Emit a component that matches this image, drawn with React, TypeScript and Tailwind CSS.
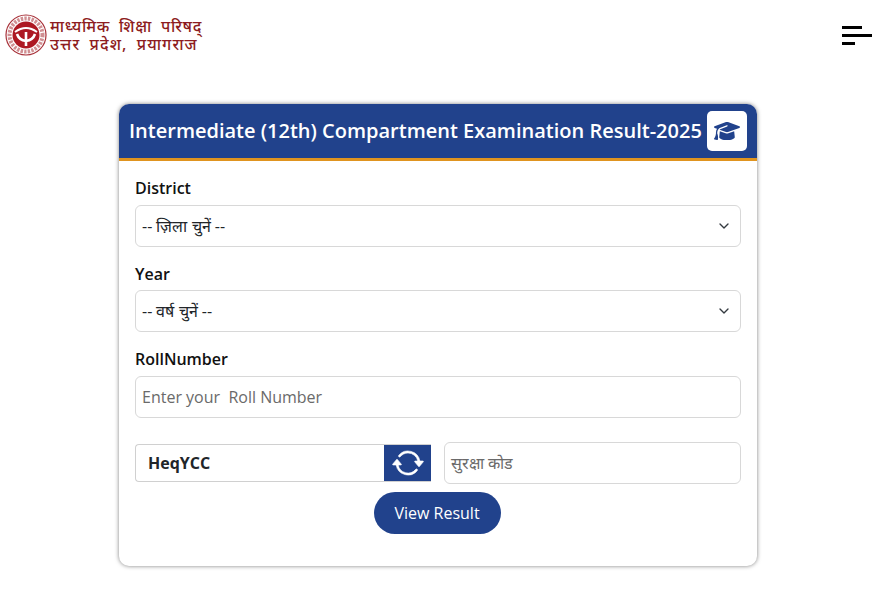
import { BsArrowRepeat } from "react-icons/bs";
import { FaGraduationCap } from "react-icons/fa6";
import { LuChevronDown } from "react-icons/lu";

function Emblem() {
  return (
    <svg viewBox="0 0 42 42" className="h-[42px] w-[42px] shrink-0">
      <circle cx="21" cy="21" r="20" fill="#fff" stroke="#a8323a" strokeWidth="1.2" />
      <circle cx="21" cy="21" r="16.5" fill="none" stroke="#d08f92" strokeWidth="4" strokeDasharray="2.4 1.2" />
      <circle cx="21" cy="21" r="13.5" fill="#ad1822" />
      <path d="M10 18 Q21 10 32 18" stroke="#fff" strokeWidth="2" fill="none" />
      <path d="M21 18 L21 32 M21 27 Q14 26 12 20 M21 27 Q28 26 30 20" stroke="#fff" strokeWidth="2.6" fill="none" />
    </svg>
  );
}

function Logo() {
  return (
    <div className="flex items-center gap-[3px]">
      <Emblem />
      <div className="flex flex-col font-['Noto_Sans',sans-serif] text-[#8d1c20]">
        <span className="text-[16px] font-medium leading-[18px] tracking-[0.7px] [word-spacing:4px] whitespace-nowrap">माध्यमिक शिक्षा परिषद्</span>
        <span className="text-[16px] font-medium leading-[18px] tracking-[1.1px] [word-spacing:4px] whitespace-nowrap">उत्तर प्रदेश, प्रयागराज</span>
      </div>
    </div>
  );
}

function Hamburger() {
  return (
    <div className="flex w-[30px] flex-col items-start gap-[5px]">
      <span className="h-[3px] w-[20px] bg-black" />
      <span className="h-[3px] w-[30px] bg-black" />
      <span className="h-[3px] w-[13px] bg-black" />
    </div>
  );
}

function SelectField({ label, placeholder, gap }: { label: string; placeholder: string; gap: string }) {
  return (
    <div className="mb-[15px]">
      <div className={`${gap} text-base leading-[24px] font-semibold text-[#111]`}>{label}</div>
      <div className="flex h-[42px] items-center justify-between rounded-md border border-[#d8d8d8] bg-white pl-[6px] pr-[8px]">
        <span className="text-base text-[#212529]">{placeholder}</span>
        <LuChevronDown className="h-[16px] w-[16px] text-[#343a40]" />
      </div>
    </div>
  );
}

export default function App() {
  return (
    <div className="min-h-[589px] bg-white font-['Open_Sans',sans-serif]">
      <div className="flex items-center justify-between pl-[5px] pr-[7px] pt-[14px]">
        <Logo />
        <Hamburger />
      </div>

      <div className="ml-[119px] mt-[48px] w-[638px] rounded-[10px] bg-white shadow-[0_0_4px_rgba(0,0,0,0.5)]">
        <div className="flex h-[57px] items-center justify-between rounded-t-[10px] border-b-[3px] border-[#e0941f] bg-[#21428c] px-[10px]">
          <h1 className="text-[20px] font-semibold whitespace-nowrap text-white">
            Intermediate (12th) Compartment Examination Result-2025
          </h1>
          <div className="flex h-[40px] w-[40px] items-center justify-center rounded-[5px] bg-white">
            <FaGraduationCap className="h-[26px] w-[26px] text-[#21428c]" />
          </div>
        </div>

        <div className="px-[16px] pb-[32px] pt-[15px]">
          <SelectField label="District" placeholder="-- ज़िला चुनें --" gap="mb-[5px]" />
          <SelectField label="Year" placeholder="-- वर्ष चुनें --" gap="mb-[4px]" />

          <div className="mb-[24px]">
            <div className="mb-[5px] text-base leading-[24px] font-semibold text-[#111]">RollNumber</div>
            <div className="flex h-[42px] items-center rounded-md border border-[#d8d8d8] bg-white pl-[6px] text-base text-[#6a6a6a]">
              Enter your&nbsp; Roll Number
            </div>
          </div>

          <div className="flex items-center gap-[13px]">
            <div className="flex h-[38px] w-[296px] items-stretch rounded-l-[4px] border border-r-0 border-[#d0d0d0]">
              <div className="flex flex-1 items-center pl-[12px] text-base font-bold text-[#212529]">HeqYCC</div>
              <div className="flex w-[47px] items-center justify-center bg-[#21428c]">
                <BsArrowRepeat className="h-[32px] w-[32px] text-white" strokeWidth={0.3} />
              </div>
            </div>
            <div className="flex h-[42px] flex-1 items-center rounded-md border border-[#d8d8d8] bg-white pl-[6px] text-base text-[#6a6a6a]">
              सुरक्षा कोड
            </div>
          </div>

          <div className="mt-[8px] flex justify-center pr-[2px]">
            <div className="flex h-[42px] w-[127px] items-center justify-center rounded-full bg-[#21428c] text-base text-white">
              View Result
            </div>
          </div>
        </div>
      </div>
    </div>
  );
}
